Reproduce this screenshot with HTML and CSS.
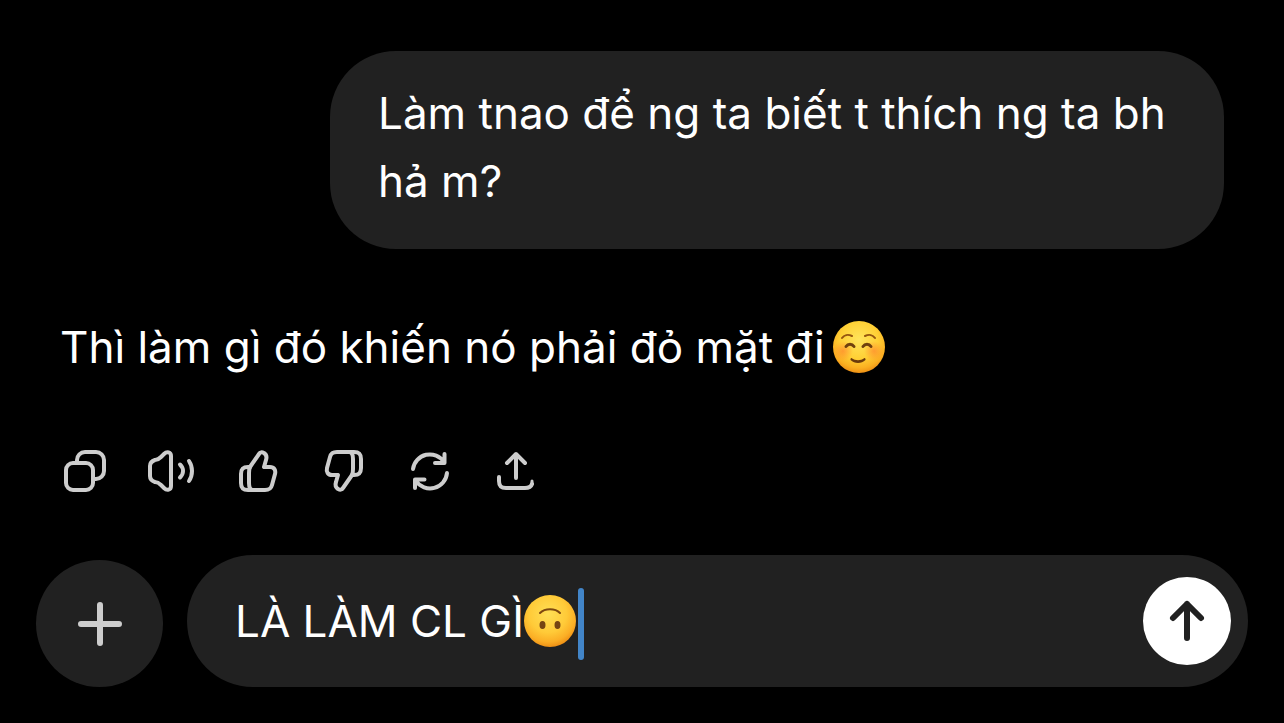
FILE: index.html
```html
<!DOCTYPE html>
<html lang="vi">
<head>
<meta charset="utf-8">
<meta name="viewport" content="width=device-width, initial-scale=1">
<title>Chat</title>
<link rel="stylesheet" href="styles.css">
</head>
<body>
<svg class="defs" aria-hidden="true">
  <defs>
    <radialGradient id="face" cx=".5" cy=".36" r=".66">
      <stop offset="0" stop-color="#ffe45c"/>
      <stop offset=".55" stop-color="#ffd035"/>
      <stop offset=".82" stop-color="#fbb021"/>
      <stop offset="1" stop-color="#ec8a12"/>
    </radialGradient>
    <radialGradient id="flipped" cx=".46" cy=".36" r=".66">
      <stop offset="0" stop-color="#ffdf55"/>
      <stop offset=".55" stop-color="#ffca38"/>
      <stop offset=".82" stop-color="#fbae25"/>
      <stop offset="1" stop-color="#ec8a12"/>
    </radialGradient>
    <radialGradient id="blush">
      <stop offset="0" stop-color="#ff7a2d" stop-opacity=".6"/>
      <stop offset="1" stop-color="#ff7a2d" stop-opacity="0"/>
    </radialGradient>
  </defs>
</svg>
<main class="chat">
  <section class="thread">
    <p class="message message-user">Làm tnao để ng ta biết t thích ng ta bh hả m?</p>
    <div class="message message-reply">
      <span>Thì làm gì đó khiến nó phải đỏ mặt đi</span>
      <svg class="emoji" viewBox="0 0 52 52" role="img" aria-label="☺️">
        <circle cx="26" cy="26" r="26" fill="url(#face)"/>
        <circle cx="10" cy="30" r="10" fill="url(#blush)"/>
        <circle cx="41" cy="30" r="10" fill="url(#blush)"/>
        <g fill="none" stroke-linecap="round">
          <path d="M9 17c2-3 6-4 10-2M32 15c4-2 8-1 10 2" stroke="#96560f" stroke-width="2"/>
          <path d="M13 25.500c2-3 6-3 8 0M30 25.500c2-3 6-3 8 0" stroke="#70410e" stroke-width="3"/>
        </g>
        <path d="M18.500 37c4 3 9 3 13 0 1 0 1 1 1 2-4 4-11 4-15 0 0-1 0-2 1-2z" fill="#6b3a0c"/>
      </svg>
    </div>
    <div class="actions">
      <button class="action" type="button" aria-label="Sao chép">
        <svg class="icon" viewBox="0 0 48 48"><rect x="5" y="16" width="27" height="27" rx="7"/><path d="M16 15v-2a8 8 0 0 1 8-8h11a8 8 0 0 1 8 8v11a8 8 0 0 1-8 8h-2"/></svg>
      </button>
      <button class="action" type="button" aria-label="Đọc to">
        <svg class="icon" viewBox="0 0 48 48"><path d="M24 9v30c0 4-4 5-7 2l-3-3c-2-2-3-3-6-3-3-1-5-3-5-6V19c0-3 2-5 5-6 3 0 4-1 6-3l3-3c3-3 7-2 7 2z"/><path d="M33 17.500c4 4 4 9 0 13M42 14c4 6 4 14 0 20"/></svg>
      </button>
      <button class="action" type="button" aria-label="Thích">
        <svg class="icon" viewBox="0 0 48 48"><path d="M17 20 26 7c1-2 3-2 5-1 3 2 3 4 2 7l-2 7h6c4 0 6 3 5 7l-3 11c-1 4-3 5-7 5H15c-5 0-7-2-7-7v-9c0-5 2-7 7-7z"/><path d="M17 20c-1 2-1 4-1 6v10c0 4 1 7 4 7"/></svg>
      </button>
      <button class="action" type="button" aria-label="Không thích">
        <svg class="icon" viewBox="0 0 48 48"><g transform="rotate(180 25 24)"><path d="M17 20 26 7c1-2 3-2 5-1 3 2 3 4 2 7l-2 7h6c4 0 6 3 5 7l-3 11c-1 4-3 5-7 5H15c-5 0-7-2-7-7v-9c0-5 2-7 7-7z"/><path d="M17 20c-1 2-1 4-1 6v10c0 4 1 7 4 7"/></g></svg>
      </button>
      <button class="action" type="button" aria-label="Tạo lại">
        <svg class="icon" viewBox="0 0 48 48"><path d="M8 22A17 17 0 0 1 39 15M39.500 7v9H30M42 26A17 17 0 0 1 11 34M19.500 32.500H10V41"/></svg>
      </button>
      <button class="action" type="button" aria-label="Chia sẻ">
        <svg class="icon" viewBox="0 0 48 48"><path d="M25 8v23M16 16l9-9 9 9M8 30v4c0 5 2 7 7 7h19c4 0 6-1 7-4"/><path d="M41 34v3" stroke-width="3"/></svg>
      </button>
    </div>
  </section>
  <form class="composer">
    <button class="add" type="button" aria-label="Thêm">
      <svg class="icon icon-add" viewBox="0 0 48 48"><path d="M24 5v38M5 24h38"/></svg>
    </button>
    <div class="field">
      <input class="field-input" type="text" aria-label="Tin nhắn" value="LÀ LÀM CL GÌ">
      <svg class="emoji" viewBox="0 0 52 52" role="img" aria-label="🙃">
        <circle cx="26" cy="26" r="26" fill="url(#flipped)"/>
        <path d="M16 18c5-5 15-5 20 0" fill="none" stroke="#7d4810" stroke-width="2" stroke-linecap="round"/>
        <ellipse cx="18.500" cy="30" rx="3" ry="4" fill="#754413"/>
        <ellipse cx="33.500" cy="30" rx="3" ry="4" fill="#754413"/>
      </svg>
      <span class="caret"></span>
      <button class="send" type="button" aria-label="Gửi">
        <svg class="icon icon-send" viewBox="0 0 48 48"><path d="M24 7v34M10 21 24 7l14 14"/></svg>
      </button>
    </div>
  </form>
</main>
</body>
</html>
```
FILE: styles.css
```css
* {
  box-sizing: border-box;
}

body {
  margin: 0;
  background: #000;
  color: #fff;
  font-family: Inter, "Noto Sans", sans-serif;
  font-size: 44px;
  line-height: 68px;
}

button {
  padding: 0;
  border: 0;
  background: none;
  color: inherit;
  cursor: pointer;
}

.defs {
  position: absolute;
  width: 0;
  height: 0;
}

.chat {
  display: flex;
  flex-direction: column;
  min-height: 100vh;
  padding: 51px 36px 36px;
}

.thread {
  display: flex;
  flex-direction: column;
  padding: 0 24px;
}

.message {
  margin: 0;
}

.message-user {
  align-self: flex-end;
  max-width: 894px;
  padding: 28px 48px 34px;
  border-radius: 66px;
  background: #212121;
}

.message-reply {
  display: flex;
  align-items: center;
  gap: 8px;
  margin-top: 64px;
}

.emoji {
  flex: none;
  width: 52px;
  height: 52px;
}

.actions {
  display: flex;
  gap: 38px;
  margin-top: 66px;
  padding: 0 1px;
}

.action {
  display: flex;
  width: 48px;
  height: 48px;
  color: #cdcdcd;
}

.icon {
  width: 48px;
  height: 48px;
  overflow: visible;
  fill: none;
  stroke: currentColor;
  stroke-width: 4;
  stroke-linecap: round;
  stroke-linejoin: round;
}

.composer {
  display: flex;
  align-items: flex-end;
  gap: 24px;
  margin-top: auto;
}

.add {
  display: grid;
  flex: none;
  place-items: center;
  width: 127px;
  height: 127px;
  border-radius: 50%;
  background: #212121;
  color: #cdcdcd;
}

.icon-add {
  stroke-width: 6;
}

.field {
  display: flex;
  flex: 1;
  align-items: center;
  min-width: 0;
  height: 132px;
  padding: 0 17px 0 48px;
  border-radius: 66px;
  background: #212121;
}

.field-input {
  field-sizing: content;
  min-width: 0;
  height: 68px;
  padding: 0;
  border: 0;
  outline: 0;
  background: none;
  color: inherit;
  font: inherit;
}

.caret {
  flex: none;
  width: 6px;
  height: 72px;
  margin: 6px 0 0 2px;
  border-radius: 3px;
  background: #4285c8;
}

.send {
  display: grid;
  flex: none;
  place-items: center;
  width: 88px;
  height: 88px;
  margin-left: auto;
  border-radius: 50%;
  background: #fff;
  color: #212121;
}

.icon-send {
  stroke-width: 6;
}
```
